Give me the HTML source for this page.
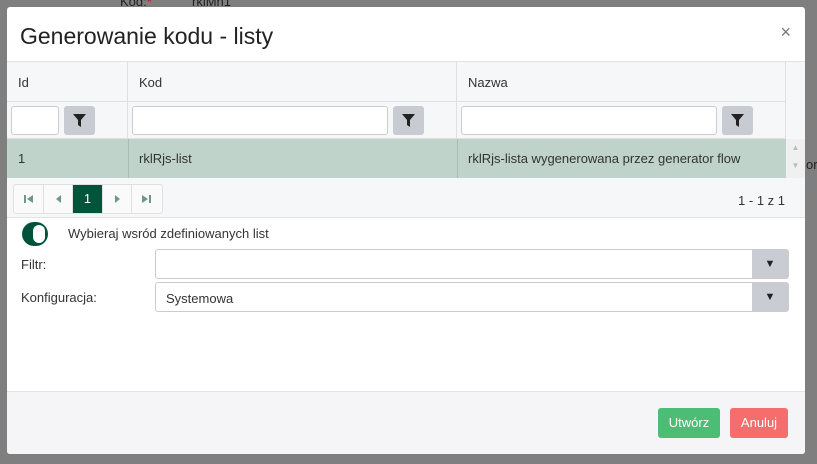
<!DOCTYPE html>
<html><head><meta charset="utf-8"><style>
*{box-sizing:border-box;margin:0;padding:0}
body{width:817px;height:464px;background:#7f7f7f;font-family:"Liberation Sans",sans-serif;font-size:13px;color:#333;position:relative;overflow:hidden}
.bgt{position:absolute;color:#222;font-size:13px}
.modal{position:absolute;left:7px;top:7px;width:798px;height:447px;background:#fff;border-radius:3px;overflow:hidden}
.hdr{height:55px;border-bottom:1px solid #e3e3e3;position:relative}
.hdr h1{position:absolute;left:13px;top:16px;font-size:23px;font-weight:normal;color:#222}
.x{position:absolute;right:14px;top:15px;font-size:18px;color:#777}
.tbl{position:absolute;left:0;top:55px;width:798px;height:156px;background:#f6f7f9;border-bottom:1px solid #e3e3e3}
.cell{position:absolute;border-right:1px solid #e0e0e0;border-bottom:1px solid #e0e0e0}
.inp{position:absolute;background:#fff;border:1px solid #ccc;border-radius:3px;height:29px;top:4px}
.fb{position:absolute;top:4px;width:31px;height:29px;background:#c8ccd2;border-radius:3px}
.fb svg{position:absolute;left:9px;top:8px}
.row{position:absolute;left:0;top:77px;width:779px;height:39px;background:#bfd3cb}
.row span{position:absolute;top:12px;color:#333}
.pg{position:absolute;left:6px;top:122px;height:30px;width:150px;border:1px solid #e0e0e0;border-radius:3px;background:#fafafa;display:flex}
.pg div{width:30px;border-right:1px solid #e0e0e0;text-align:center;line-height:28px;position:relative}
.pg svg{position:absolute;left:10px;top:9px}
.pg .a{background:#00543a;color:#fff;font-size:13px}
.tog{position:absolute;left:15px;top:215px;width:26px;height:24px;background:#00533a;border-radius:12px}
.tog:after{content:"";position:absolute;right:3px;top:3px;width:12px;height:18px;background:#fff;border-radius:8px}
.sel{position:absolute;left:148px;width:634px;height:30px;border:1px solid #ccc;border-radius:3px;background:#fff}
.sel .ar{position:absolute;right:0;top:0;width:36px;height:28px;background:#c9cdd3;font-size:11px;text-align:center;line-height:28px;color:#222}
.ftr{position:absolute;left:0;top:384px;width:798px;height:63px;background:#f5f5f7;border-top:1px solid #e3e3e3}
.btn{position:absolute;top:16px;height:30px;color:#fff;border-radius:3px;text-align:center;line-height:30px;font-size:13px}
</style></head><body>
<div class="bgt" style="left:120px;top:-6px">Kod:<span style="color:#c00">*</span></div>
<div class="bgt" style="left:192px;top:-6px">rklMn1</div>
<div class="bgt" style="left:806px;top:157px">or</div>
<div class="modal">
<div class="hdr"><h1>Generowanie kodu - listy</h1><div class="x">×</div></div>
<div class="tbl">
<div class="cell" style="left:0;top:0;width:121px;height:40px"><span style="position:absolute;left:11px;top:13px">Id</span></div>
<div class="cell" style="left:121px;top:0;width:329px;height:40px"><span style="position:absolute;left:11px;top:13px">Kod</span></div>
<div class="cell" style="left:450px;top:0;width:329px;height:40px"><span style="position:absolute;left:11px;top:13px">Nazwa</span></div>
<div class="cell" style="left:0;top:40px;width:121px;height:37px"><div class="inp" style="left:4px;width:48px"></div><div class="fb" style="left:57px"><svg width="13" height="13" viewBox="0 0 13 13"><path d="M0 0H13L8 6V13L5 11V6Z" fill="#222"/></svg></div></div>
<div class="cell" style="left:121px;top:40px;width:329px;height:37px"><div class="inp" style="left:4px;width:256px"></div><div class="fb" style="left:265px"><svg width="13" height="13" viewBox="0 0 13 13"><path d="M0 0H13L8 6V13L5 11V6Z" fill="#222"/></svg></div></div>
<div class="cell" style="left:450px;top:40px;width:329px;height:37px"><div class="inp" style="left:4px;width:256px"></div><div class="fb" style="left:265px"><svg width="13" height="13" viewBox="0 0 13 13"><path d="M0 0H13L8 6V13L5 11V6Z" fill="#222"/></svg></div></div>
<div class="row"><span style="left:11px">1</span><span style="left:132px">rklRjs-list</span><span style="left:461px">rklRjs-lista wygenerowana przez generator flow</span>
<div style="position:absolute;left:121px;top:0;width:1px;height:39px;background:#a9bdb5"></div><div style="position:absolute;left:450px;top:0;width:1px;height:39px;background:#a9bdb5"></div></div>
<div style="position:absolute;left:779px;top:77px;width:19px;height:39px;background:#f0f0f0;color:#bbb;font-size:8px;text-align:center;line-height:18px">▲<br>▼</div>
<div class="pg">
<div><svg width="9" height="10"><rect x="0" y="1" width="2" height="8" fill="#6a9a86"/><path d="M9 1V9L3 5Z" fill="#6a9a86"/></svg></div>
<div><svg width="9" height="10"><path d="M7 1V9L2 5Z" fill="#6a9a86"/></svg></div>
<div class="a">1</div>
<div><svg width="9" height="10"><path d="M2 1V9L7 5Z" fill="#6a9a86"/></svg></div>
<div style="border:0"><svg width="9" height="10"><path d="M0 1V9L6 5Z" fill="#6a9a86"/><rect x="7" y="1" width="2" height="8" fill="#6a9a86"/></svg></div></div>
<div style="position:absolute;right:20px;top:131px;color:#333">1 - 1 z 1</div>
</div>
<div class="tog"></div>
<div style="position:absolute;left:61px;top:219px">Wybieraj wsród zdefiniowanych list</div>
<div style="position:absolute;left:14px;top:250px">Filtr:</div>
<div class="sel" style="top:242px"><div class="ar">▼</div></div>
<div style="position:absolute;left:14px;top:283px">Konfiguracja:</div>
<div class="sel" style="top:275px"><span style="position:absolute;left:10px;top:8px">Systemowa</span><div class="ar">▼</div></div>
<div class="ftr">
<div class="btn" style="left:651px;width:62px;background:#4cbd74">Utwórz</div>
<div class="btn" style="left:723px;width:58px;background:#f56d6d">Anuluj</div>
</div>
</div>
</body></html>
